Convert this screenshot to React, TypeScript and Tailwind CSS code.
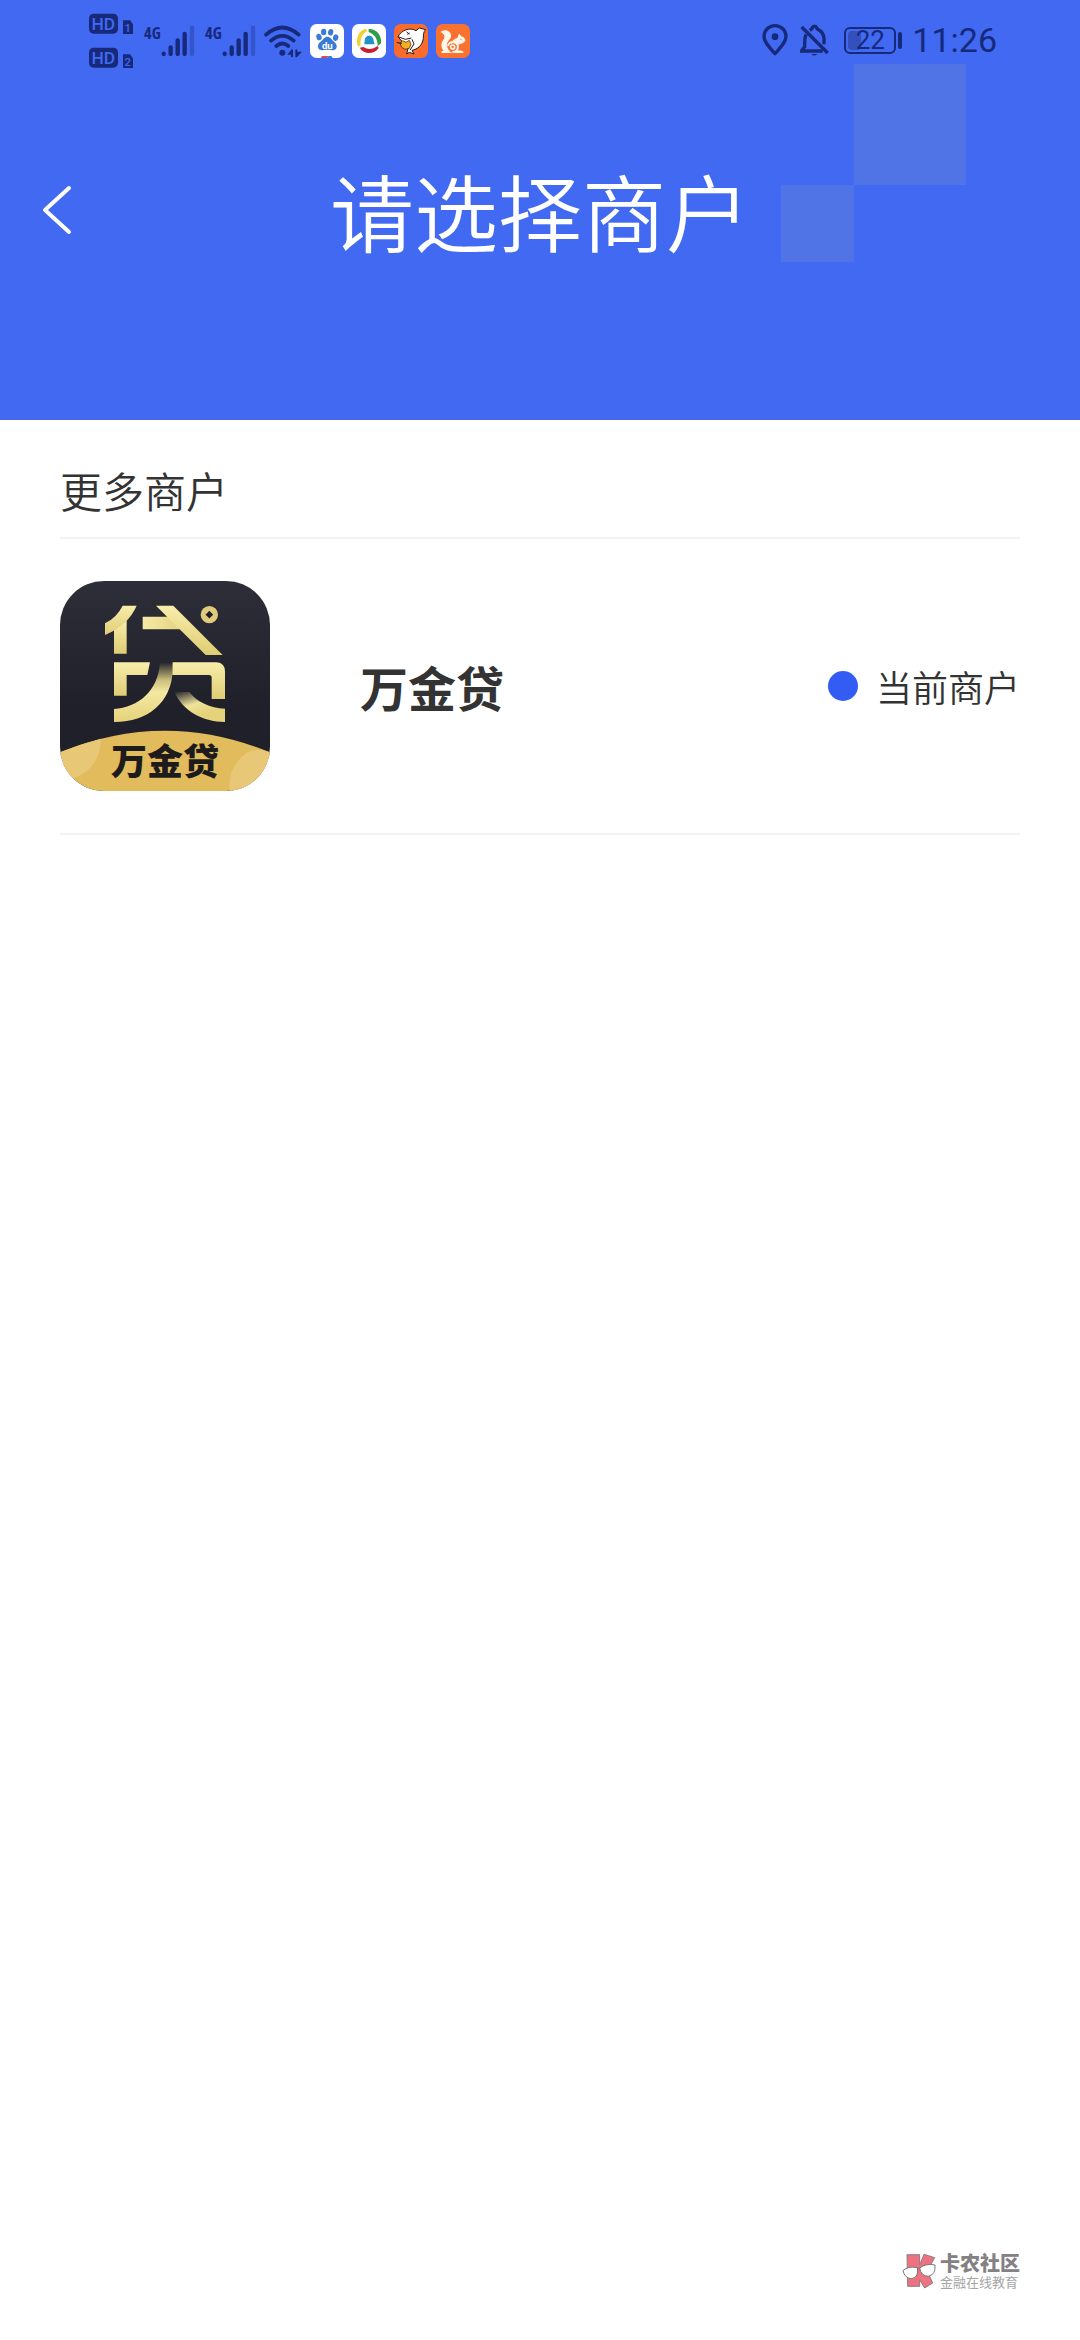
import React from 'react';

interface Merchant {
  id: string;
  name: string;
  current: boolean;
}

const merchants: Merchant[] = [{ id: 'wanjindai', name: '万金贷', current: true }];

function HdBadges() {
  return (
    <svg className="w-[46px] h-[60px] overflow-visible" viewBox="0 -12 138 180" fill="#16297b" fontFamily="Roboto, sans-serif">
      <rect x="0" y="2" width="87" height="60" rx="14" />
      <path d="M103 22h20l9 12v29h-30V22z" />
      <rect x="0" y="104" width="87" height="60" rx="14" />
      <path d="M103 124h20l9 12v29h-30v-41z" />
      <g fill="#4169f1" textAnchor="middle" fontWeight="500">
        <text x="43" y="50" fontSize="52">HD</text>
        <text x="43" y="152" fontSize="52">HD</text>
        <text x="116" y="57" fontSize="34">1</text>
        <text x="116" y="159" fontSize="34">2</text>
      </g>
    </svg>
  );
}

function Signal() {
  return (
    <svg className="w-[51px] h-[37px] overflow-visible" viewBox="0 -12 153 111">
      <text x="0" y="42" fontSize="50" fontWeight="700" fill="#16297b" fontFamily="'Open Sans Condensed', 'Roboto Condensed', Roboto, sans-serif">4G</text>
      <g strokeWidth="13" strokeLinecap="round" stroke="#16297b">
        <path d="M59 86v1M80 67v20M101 46v41M122 27v60" />
        <path d="M144 8v79" stroke="#3354cb" />
      </g>
    </svg>
  );
}

function Wifi() {
  return (
    <svg className="w-[38px] h-[33px]" viewBox="0 0 114 99" fill="none" stroke="#16297b" strokeWidth="11" strokeLinecap="round">
      <path d="M6 29Q55-14 104 29M21 47Q55 18 89 47M37 63Q55 48 73 63" />
      <circle cx="55" cy="83" r="9" fill="#16297b" stroke="none" />
      <path d="M84 76v18M84 76l-8 10h8M97 76v18M97 94l10-11h-10" strokeWidth="6" />
    </svg>
  );
}

function BaiduIcon() {
  return (
    <svg className="w-[34px] h-[34px]" viewBox="0 0 102 102">
      <rect width="102" height="102" rx="20" fill="#fff" />
      <g fill="#3b7bd6">
        <ellipse cx="27" cy="39" rx="8" ry="10" transform="rotate(-12 27 39)" />
        <ellipse cx="41" cy="24" rx="8" ry="10" />
        <ellipse cx="62" cy="25" rx="8" ry="10" transform="rotate(10 62 25)" />
        <ellipse cx="77" cy="41" rx="8" ry="10" transform="rotate(12 77 41)" />
        <path d="M52 38c9 0 13 8 18 13 7 6 11 10 10 18-1 8-9 11-17 9-8-1-14-1-22 0-8 2-16-1-17-9-1-8 4-13 10-18 6-5 9-13 18-13z" />
      </g>
      <text x="52" y="74" fontSize="29" fontWeight="700" fill="#fff" textAnchor="middle" fontFamily="Roboto, sans-serif">du</text>
      <path d="M32 102l4-6h20l-6 6z" fill="#e04653" />
      <path d="M50 102l6-6h8l4 6z" fill="#3b7bd6" />
    </svg>
  );
}

function SwirlIcon() {
  return (
    <svg className="w-[34px] h-[34px]" viewBox="0 0 102 102">
      <rect width="102" height="102" rx="20" fill="#fff" />
      <path d="M42 14C18 20 10 45 18 68l8-4C24 44 30 30 45 22z" fill="#f3cf2f" />
      <path d="M50 15c24-1 40 19 37 43l-10 8c0-21-8-34-27-42z" fill="#2d9e44" />
      <path d="M23 71c14 23 44 20 57 1l-3-6c-15 10-28 12-43 3z" fill="#c8202f" />
      <path d="M51 35c10 0 14 8 14 17l3 9H37l1-9c0-9 4-17 13-17z" fill="#2390c8" />
    </svg>
  );
}

function FishIcon() {
  return (
    <svg className="w-[34px] h-[34px]" viewBox="0 0 102 102">
      <rect width="102" height="102" rx="20" fill="#fb6c2c" />
      <path
        d="M12 38C22 18 48 9 66 20L76 12l19 5c-7 6-7 16-7 26-3 23-19 33-34 36l6 11-14-5-8 5 4-16z"
        fill="#fff"
        stroke="#2a1a17"
        strokeWidth="3"
        strokeLinejoin="round"
      />
      <path d="M18 58l8-8 10 5 10-6 5 12-5 12-13 3-10-6z" fill="#f5ae1e" stroke="#2a1a17" strokeWidth="2" />
      <path d="M38 24l8 6M40 31l7-4M12 38l22 8 18-4M8 56l16 2M54 46l6 14-12 18" fill="none" stroke="#2a1a17" strokeWidth="3" />
    </svg>
  );
}

function SquirrelIcon() {
  return (
    <svg className="w-[34px] h-[34px]" viewBox="0 0 102 102">
      <rect width="102" height="102" rx="20" fill="#fa7230" />
      <g fill="#fff5e8">
        <path d="M14 24c10-10 29-6 31 9 2 12-12 17-12 29 0 11 6 19 15 25H18c-4-2-2-7 5-7-10-10-8-24 0-34 5-7 2-16-9-22z" />
        <path d="M64 42l5-13 7 8c9 2 13 9 12 13-3 6-10 9-16 10l-8 4c-8-8-15-7-21-5 6-10 13-14 21-17z" />
        <path d="M59 78l18 2c7 2 7 7 3 7H57z" />
      </g>
      <path d="M36 66a15 15 0 1 1 13 18" fill="none" stroke="#fff5e8" strokeWidth="6" />
      <circle cx="50" cy="69" r="6" fill="none" stroke="#fff5e8" strokeWidth="5" />
      <circle cx="75" cy="46" r="2" fill="#fa7230" />
    </svg>
  );
}

function StatusBar() {
  return (
    <div className="relative flex items-center justify-between h-[78px] pl-[89px] pr-[83px] font-[Roboto,sans-serif]">
      <div className="flex items-center">
        <HdBadges />
        <div className="flex items-end gap-2 pl-[9px]">
          <div className="flex gap-[10px]">
            <Signal />
            <Signal />
          </div>
          <Wifi />
          <div className="flex gap-2">
            <BaiduIcon />
            <SwirlIcon />
            <FishIcon />
            <SquirrelIcon />
          </div>
        </div>
      </div>
      <div className="flex items-center pt-[2px] text-[#16297b]">
        <svg className="w-[26px] h-8" viewBox="0 0 78 96" fill="none" stroke="currentColor" strokeWidth="10">
          <path d="M39 89C24 71 6 56 6 37a33 32 0 0 1 66 0c0 19-18 34-33 52z" strokeLinejoin="round" />
          <circle cx="39" cy="38" r="10" fill="currentColor" stroke="none" />
        </svg>
        <svg className="w-[29px] h-8 ml-3" viewBox="0 0 87 96" fill="none" stroke="currentColor" strokeWidth="10">
          <path d="M5 9l78 78" />
          <path d="M18 31c-3 8-4 16-4 26v12l-10 12h64" />
          <path d="M29 19c5-3 7-3 8-8 2-6 11-6 13 0 1 5 3 5 7 7 10 6 15 16 15 28v15" />
          <path d="M34 90h18q-9 9-18 0z" fill="currentColor" stroke="none" />
        </svg>
        <div className="relative flex items-center justify-center w-[52px] h-[27px] ml-[15px] rounded-md border-2 border-current">
          <div className="absolute left-[2px] inset-y-[2px] w-[13px] rounded-sm bg-[#3450bd]" />
          <span className="relative text-[26px] leading-none">22</span>
        </div>
        <div className="w-[4px] h-[17px] ml-[2px] rounded-sm bg-current" />
        <span className="ml-[10px] text-[34px] leading-8">11:26</span>
      </div>
    </div>
  );
}

function MerchantLogo() {
  return (
    <svg className="w-[210px] h-[210px] rounded-[44px] shrink-0" viewBox="0 0 630 630" role="img" aria-label="万金贷">
      <defs>
        <linearGradient id="night" x1="0" y1="0" x2="0" y2="1">
          <stop offset="0" stopColor="#2d2e38" />
          <stop offset="0.6" stopColor="#20202b" />
        </linearGradient>
        <linearGradient id="gold" x1="0" y1="0" x2="0" y2="1">
          <stop offset="0" stopColor="#f8eeab" />
          <stop offset="1" stopColor="#dfcc74" />
        </linearGradient>
        <linearGradient id="goldAcross" x1="0" y1="0" x2="1" y2="0">
          <stop offset="0" stopColor="#f6eba6" />
          <stop offset="1" stopColor="#e2d07c" />
        </linearGradient>
        <linearGradient id="sweepLeft" x1="0" y1="0" x2="0" y2="1">
          <stop offset="0" stopColor="#24242d" />
          <stop offset="0.3" stopColor="#cdbf7c" />
          <stop offset="0.5" stopColor="#f3e8a2" />
          <stop offset="1" stopColor="#e5d27a" />
        </linearGradient>
        <linearGradient id="sweepRight" x1="0" y1="0" x2="0.4" y2="0.8">
          <stop offset="0" stopColor="#24242d" />
          <stop offset="0.6" stopColor="#efe39b" />
          <stop offset="1" stopColor="#e5d27a" />
        </linearGradient>
      </defs>
      <rect width="630" height="630" fill="url(#night)" />
      <path d="M162 135L200 115V218H162z" fill="url(#gold)" />
      <path d="M188 74H230Q205 132 135 162V127Q170 110 188 74z" fill="url(#gold)" />
      <path d="M248 107H335L375 145H248z" fill="url(#goldAcross)" />
      <path d="M288 74H340L488 222H437z" fill="url(#gold)" />
      <circle cx="448" cy="101" r="26" fill="#e0cb7a" />
      <path d="M448 93l4 4 4 4-4 4-4 4-4-4-4-4 4-4z" fill="#20202b" stroke="#20202b" strokeWidth="5" />
      <path d="M162 244H270L262 282H200V344H162z" fill="url(#gold)" />
      <path d="M300 244H338V270C334 365 262 424 162 423V384C235 380 295 330 300 244z" fill="url(#sweepLeft)" />
      <path d="M338 244H470Q495 246 495 272V354H455V290Q455 282 447 282H337z" fill="url(#gold)" />
      <path d="M343 333H388C410 362 450 382 495 383V423C425 422 370 390 343 333z" fill="url(#sweepRight)" />
      <path d="M0 514Q315 384 630 514V630H0z" fill="#e2bc5c" />
      <path d="M0 514Q60 489 123 473Q120 560 45 590Q20 600 0 595z" fill="#e8c877" />
      <path d="M630 514Q590 500 560 515Q500 560 510 630H630z" fill="#e8c877" />
      <text x="315" y="583" fontSize="108" fontWeight="900" fill="#1d1b1c" textAnchor="middle" fontFamily="'Noto Sans CJK SC', sans-serif">万金贷</text>
    </svg>
  );
}

function MerchantRow({ merchant }: { merchant: Merchant }) {
  return (
    <li className="border-b-2 border-[#f3f3f3]">
      <button type="button" className="flex items-center w-full py-[42px] text-left">
        <MerchantLogo />
        <span className="flex-1 pl-[90px] text-5xl font-bold">{merchant.name}</span>
        {merchant.current && (
          <span className="flex items-center gap-[18px] text-4xl font-[350]">
            <span className="w-[30px] h-[30px] rounded-full bg-[#335cf5]" />
            当前商户
          </span>
        )}
      </button>
    </li>
  );
}

function CommunityMark() {
  return (
    <footer className="flex justify-end items-center gap-1 mt-auto pr-[60px] pb-[50px] font-[Roboto,'Noto_Sans_CJK_SC',sans-serif]">
      <svg className="w-[34px] h-[36px]" viewBox="0 0 102 108" strokeLinejoin="round">
        <path d="M15 5H53V36L66 4 98 14 76 54 92 90 68 105 53 80V100H17z" fill="#ee7280" stroke="#8b7f83" strokeWidth="3" />
        <g fill="#fff" stroke="#777" strokeWidth="3">
          <path d="M3 53Q18 38 46 44Q51 73 29 77Q8 76 3 53z" />
          <path d="M53 45Q72 30 99 36Q102 64 79 70Q57 69 53 45z" />
          <path d="M46 46l7-1" />
        </g>
      </svg>
      <div className="text-[#858183]">
        <p className="text-xl leading-6 font-black">卡农社区</p>
        <p className="text-[13px] leading-[14px] text-[#a5a5a5]">金融在线教育</p>
      </div>
    </footer>
  );
}

export default function App() {
  return (
    <div className="flex flex-col min-h-screen bg-white text-[#333] font-['Noto_Sans_CJK_SC',sans-serif]">
      <header className="relative pb-[147px] bg-[#4169f1]">
        <div className="absolute top-16 right-[114px] w-[112px] h-[121px] bg-[#5073e5]" />
        <div className="absolute top-[185px] right-[226px] w-[73px] h-[77px] bg-[#5073e5]" />
        <StatusBar />
        <div className="relative grid grid-cols-[1fr_auto_1fr] items-center pt-[69px] text-white">
          <button type="button" aria-label="返回" className="justify-self-start pl-[42px]">
            <svg className="w-[30px] h-[50px]" viewBox="0 0 30 50" fill="none" stroke="currentColor" strokeWidth="4" strokeLinecap="round" strokeLinejoin="round">
              <path d="M27 3L3 25l24 22" />
            </svg>
          </button>
          <h1 className="text-[84px] leading-[126px] font-[350]">请选择商户</h1>
        </div>
      </header>

      <main className="px-[60px]">
        <h2 className="pt-[38px] pb-4 text-[42px] leading-[63px] font-[350] border-b-2 border-[#f3f3f3]">更多商户</h2>
        <ul>
          {merchants.map(merchant => (
            <MerchantRow key={merchant.id} merchant={merchant} />
          ))}
        </ul>
      </main>

      <CommunityMark />
    </div>
  );
}
